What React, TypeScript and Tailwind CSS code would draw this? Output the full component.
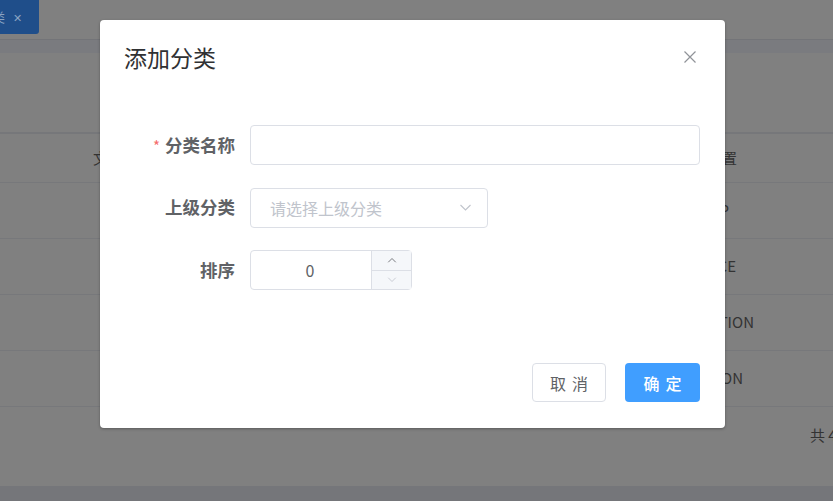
import React from "react";

const font = { fontFamily: '"Noto Sans CJK SC", "Noto Sans", sans-serif' };

const rows = ["HOME_TOP", "HOME_SERVICE", "HOME_PROMOTION", "HOME_BUTTON"];
const tails = ["TOP", "SERVICE", "PROMOTION", "BUTTON"];

function Chevron({ className, up }: { className?: string; up?: boolean }) {
  return (
    <svg viewBox="0 0 12 8" className={className} fill="none" stroke="currentColor" strokeWidth="1.1">
      {up ? <path d="M1 7 L6 2 L11 7" /> : <path d="M1 1 L6 6 L11 1" />}
    </svg>
  );
}

function Background() {
  return (
    <div className="flex h-[501px] w-[833px] flex-col overflow-hidden bg-[#808080] text-[#3a3a3a]" style={font}>
      {/* top bar with tab */}
      <div className="flex h-[39px] shrink-0 items-start bg-[#808080]">
        <div className="ml-[-45px] flex h-[34px] w-[84px] items-center justify-end gap-[8px] rounded-br-[3px] bg-[#1f4e8a] pr-[17px] text-[13px] text-[#8aa3c2]">
          <span>分类</span>
          <span className="text-[11px]">✕</span>
        </div>
      </div>
      <div className="h-[1px] shrink-0 bg-[#737478]" />
      <div className="h-[13px] shrink-0 bg-[#7a7b7f]" />
      <div className="h-[79px] shrink-0" />
      {/* table */}
      <div className="shrink-0 border-t-[2px] border-[#76777a]">
        <div className="flex h-[49px] items-center border-b border-[#77787b] text-[15px] text-[#333333]">
          <div className="w-[120px] pl-[93px]">文</div>
          <div className="flex-1" />
          <div className="w-[160px] pl-[34px]">显示位置</div>
          <div className="w-[30px]" />
        </div>
        {rows.map((r, i) => (
          <div key={r} className="flex h-[56px] items-center border-b border-[#77787b] text-[15px] text-[#333333]">
            <div className="flex-1" />
            <div className="flex w-[260px] justify-end" style={{ paddingRight: [104, 97, 79, 90][i] }}>
              <span>{tails[i]}</span>
            </div>
          </div>
        ))}
      </div>
      <div className="flex h-[56px] shrink-0 items-center justify-end text-[15px] text-[#333333]">
        <span className="w-[23px] overflow-hidden whitespace-nowrap">共 4 条</span>
      </div>
      <div className="flex-1" />
      <div className="h-[15px] shrink-0 bg-[#75767a]" />
    </div>
  );
}

function Dialog() {
  return (
    <div
      className="absolute left-[100px] top-[20px] flex w-[625px] flex-col rounded-[4px] bg-white shadow-[0_1px_3px_rgba(0,0,0,0.3)]"
      style={font}
    >
      <div className="flex h-[52px] items-end justify-between pl-[24px] pr-[29px]">
        <span className="text-[23px] leading-[30px] text-[#303133]">添加分类</span>
        <svg viewBox="0 0 12 12" className="mb-[9px] h-[12px] w-[12px]" stroke="#909399" strokeWidth="1.2">
          <path d="M0.5 0.5 L11.5 11.5 M11.5 0.5 L0.5 11.5" />
        </svg>
      </div>

      <div className="mt-[53px] flex flex-col gap-[22.5px] pl-[20px] pr-[25px]">
        <div className="flex h-[40px] items-center">
          <label className="w-[130px] pr-[15px] text-right text-[17.5px] font-bold text-[#606266]">
            <span className="mr-[5px] text-[15px] font-normal text-[#f56c6c]">*</span>
            分类名称
          </label>
          <div className="h-[40px] flex-1 rounded-[4px] border border-[#dcdfe6]" />
        </div>

        <div className="flex h-[40px] items-center">
          <label className="w-[130px] pr-[15px] text-right text-[17.5px] font-bold text-[#606266]">上级分类</label>
          <div className="flex h-[40px] w-[238px] items-center justify-between rounded-[4px] border border-[#dcdfe6] pl-[19px] pr-[15px]">
            <span className="text-[16px] text-[#c0c4cc]">请选择上级分类</span>
            <Chevron className="h-[8px] w-[13px] text-[#c0c4cc]" />
          </div>
        </div>

        <div className="flex h-[40px] items-center">
          <label className="w-[130px] pr-[15px] text-right text-[17.5px] font-bold text-[#606266]">排序</label>
          <div className="flex h-[40px] w-[162px] rounded-[4px] border border-[#dcdfe6]">
            <div className="flex flex-1 items-center justify-center pr-[2px] text-[16px] text-[#606266]">0</div>
            <div className="flex w-[40px] flex-col border-l border-[#dcdfe6] bg-[#f5f7fa]">
              <div className="flex flex-1 items-center justify-center border-b border-[#dcdfe6]">
                <Chevron up className="h-[6px] w-[10px] text-[#606266]" />
              </div>
              <div className="flex flex-1 items-center justify-center">
                <Chevron className="h-[6px] w-[10px] text-[#c0c4cc]" />
              </div>
            </div>
          </div>
        </div>
      </div>

      <div className="mt-[73px] flex justify-end gap-[19px] pb-[26px] pr-[25px]">
        <button className="h-[39px] w-[74px] rounded-[4px] border border-[#dcdfe6] bg-white pl-[6px] text-[16px] tracking-[6px] text-[#606266]">
          取消
        </button>
        <button className="h-[39px] w-[75px] rounded-[4px] bg-[#409eff] pl-[6px] text-[16px] font-medium tracking-[6px] text-white">
          确定
        </button>
      </div>
    </div>
  );
}

export default function App() {
  return (
    <div className="relative h-[501px] w-[833px] overflow-hidden">
      <Background />
      <Dialog />
    </div>
  );
}
